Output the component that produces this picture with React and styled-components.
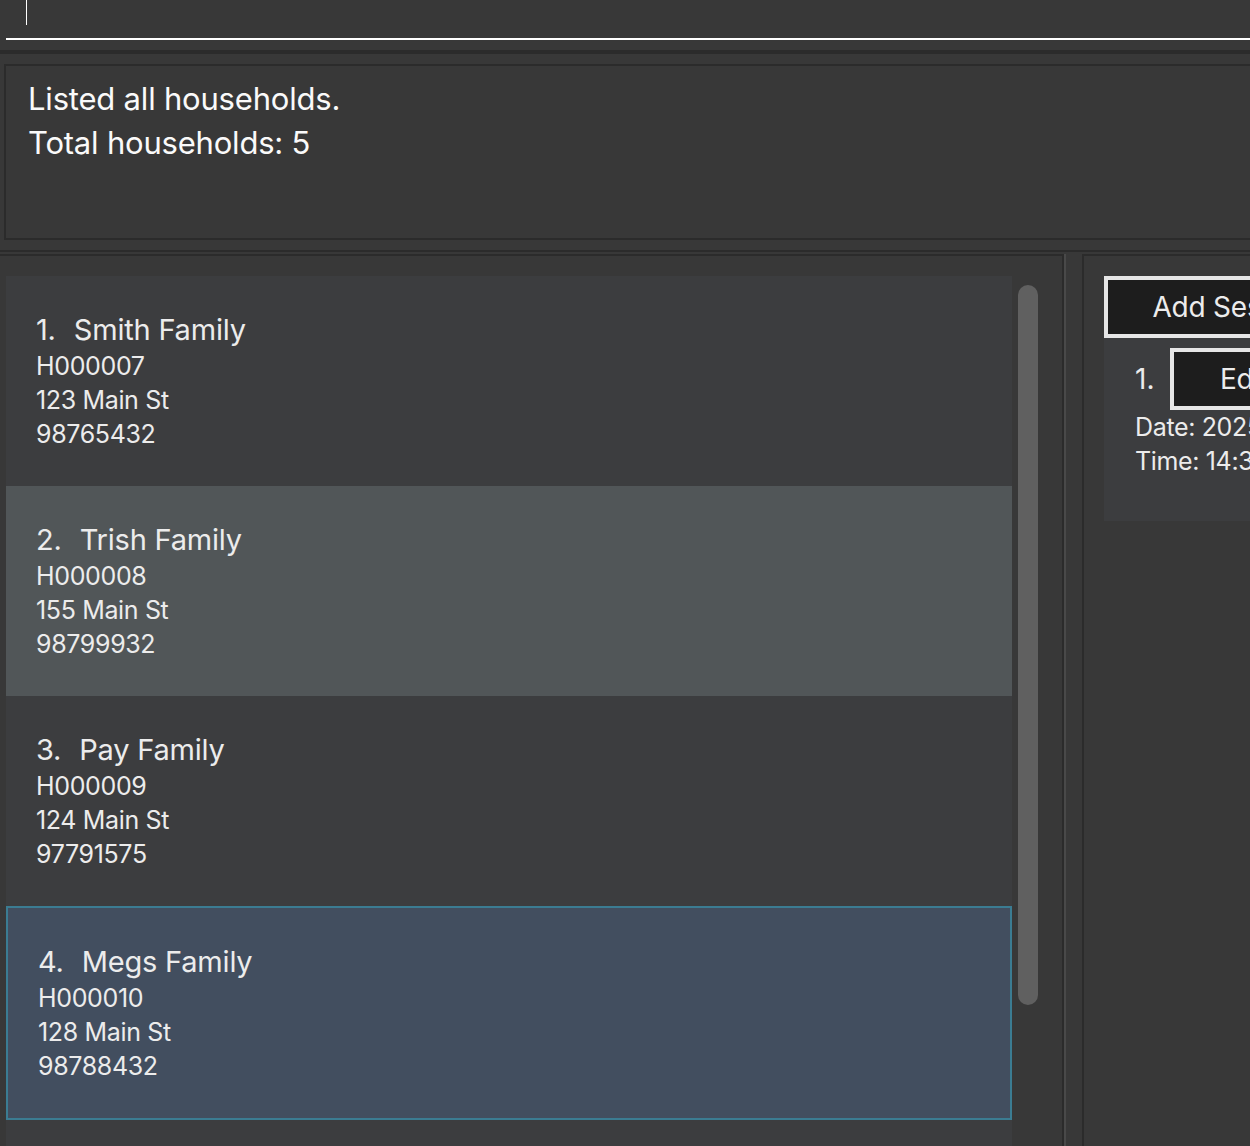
import React from "react";
import styled, { createGlobalStyle } from "styled-components";

const Global = createGlobalStyle`
  html, body { margin: 0; padding: 0; background: #383838; overflow: hidden; }
  body { font-family: Inter, "Noto Sans", "Liberation Sans", sans-serif; }
  * { box-sizing: border-box; }
`;

const Window = styled.div`
  width: 1450px;
  height: 1146px;
  display: flex;
  flex-direction: column;
  background: #383838;
  color: #ececec;
  overflow: hidden;
`;

const CommandBar = styled.div`
  height: 50px;
  padding-left: 6px;
  flex: none;
`;

const CommandField = styled.div`
  height: 40px;
  border-bottom: 2px solid #ffffff;
  padding-left: 20px;
  display: flex;
  align-items: flex-start;
`;

const Caret = styled.span`
  width: 1px;
  height: 25px;
  background: #ffffff;
`;

const Rule = styled.div`
  flex: none;
  height: ${(p) => p.$h}px;
  background: #2b2b2b;
  margin-bottom: ${(p) => p.$after || 0}px;
`;

const ResultArea = styled.div`
  flex: none;
  padding: 10px 0 10px 4px;
`;

const ResultBox = styled.div`
  height: 176px;
  border: 2px solid #2b2b2b;
  border-right: none;
  padding: 11px 0 0 22px;
  font-size: 31px;
  line-height: 44px;
  color: #fafafa;
  letter-spacing: -0.2px;
`;

const Panels = styled.div`
  flex: 1;
  display: flex;
  min-height: 0;
`;

const ListPanel = styled.div`
  width: 1064px;
  flex: none;
  border-top: 2px solid #2b2b2b;
  border-right: 2px solid #2b2b2b;
  padding: 20px 22px 0 6px;
  display: flex;
`;

const CardList = styled.div`
  flex: 1;
  display: flex;
  flex-direction: column;
  overflow: hidden;
`;

const Card = styled.div`
  flex: none;
  height: ${(p) => (p.$selected ? 214 : 210)}px;
  background: ${(p) =>
    p.$selected ? "#424e5f" : p.$alt ? "#515658" : "#3c3d3f"};
  border: ${(p) => (p.$selected ? "2px solid #3b7c92" : "none")};
  padding: 35px 0 0 30px;
  color: #ececec;
`;

const Title = styled.div`
  font-size: 29px;
  line-height: 38px;
  display: flex;
  letter-spacing: -0.2px;
`;

const Index = styled.span`
  margin-right: 18px;
`;

const Detail = styled.div`
  font-size: 25px;
  line-height: 34px;
  letter-spacing: -0.35px;
`;

const ScrollTrack = styled.div`
  width: 28px;
  flex: none;
  padding: 9px 2px 0 6px;
`;

const Thumb = styled.div`
  width: 20px;
  height: 720px;
  border-radius: 10px;
  background: #606060;
`;

const Splitter = styled.div`
  width: 18px;
  flex: none;
  border-left: 2px solid #494949;
`;

const DetailPanel = styled.div`
  flex: 1;
  border-top: 2px solid #2b2b2b;
  border-left: 2px solid #2b2b2b;
  padding: 20px;
  display: flex;
  flex-direction: column;
  align-items: flex-start;
`;

const OutlineButton = styled.div`
  width: ${(p) => p.$w}px;
  height: 62px;
  flex: none;
  border: 4px solid #e6e6e6;
  background: #1d1d1d;
  color: #ececec;
  font-size: 28px;
  display: flex;
  align-items: center;
  justify-content: center;
  letter-spacing: -0.2px;
`;

const SessionCard = styled.div`
  width: 340px;
  height: 183px;
  background: #3c3d3f;
  padding: 10px 0 0 31px;
`;

const SessionRow = styled.div`
  display: flex;
  align-items: center;
  gap: 16px;
  font-size: 28px;
`;

const households = [
  { name: "Smith Family", id: "H000007", addr: "123 Main St", phone: "98765432" },
  { name: "Trish Family", id: "H000008", addr: "155 Main St", phone: "98799932" },
  { name: "Pay Family", id: "H000009", addr: "124 Main St", phone: "97791575" },
  { name: "Megs Family", id: "H000010", addr: "128 Main St", phone: "98788432" },
];

export default function App() {
  return (
    <>
      <Global />
      <Window>
        <CommandBar>
          <CommandField>
            <Caret />
          </CommandField>
        </CommandBar>
        <Rule $h={4} />
        <ResultArea>
          <ResultBox>
            <div>Listed all households.</div>
            <div>Total households: 5</div>
          </ResultBox>
        </ResultArea>
        <Rule $h={2} $after={2} />
        <Panels>
          <ListPanel>
            <CardList>
              {households.map((h, i) => (
                <Card key={h.id} $alt={i === 1} $selected={i === 3}>
                  <Title>
                    <Index>{i + 1}.</Index>
                    <span>{h.name}</span>
                  </Title>
                  <Detail>{h.id}</Detail>
                  <Detail>{h.addr}</Detail>
                  <Detail>{h.phone}</Detail>
                </Card>
              ))}
              <Card aria-hidden="true" />
            </CardList>
            <ScrollTrack>
              <Thumb />
            </ScrollTrack>
          </ListPanel>
          <Splitter />
          <DetailPanel>
            <OutlineButton $w={260}>Add Session</OutlineButton>
            <SessionCard>
              <SessionRow>
                <span>1.</span>
                <OutlineButton $w={148}>Edit</OutlineButton>
              </SessionRow>
              <Detail>Date: 2025-10-20</Detail>
              <Detail>Time: 14:30</Detail>
            </SessionCard>
          </DetailPanel>
        </Panels>
      </Window>
    </>
  );
}
